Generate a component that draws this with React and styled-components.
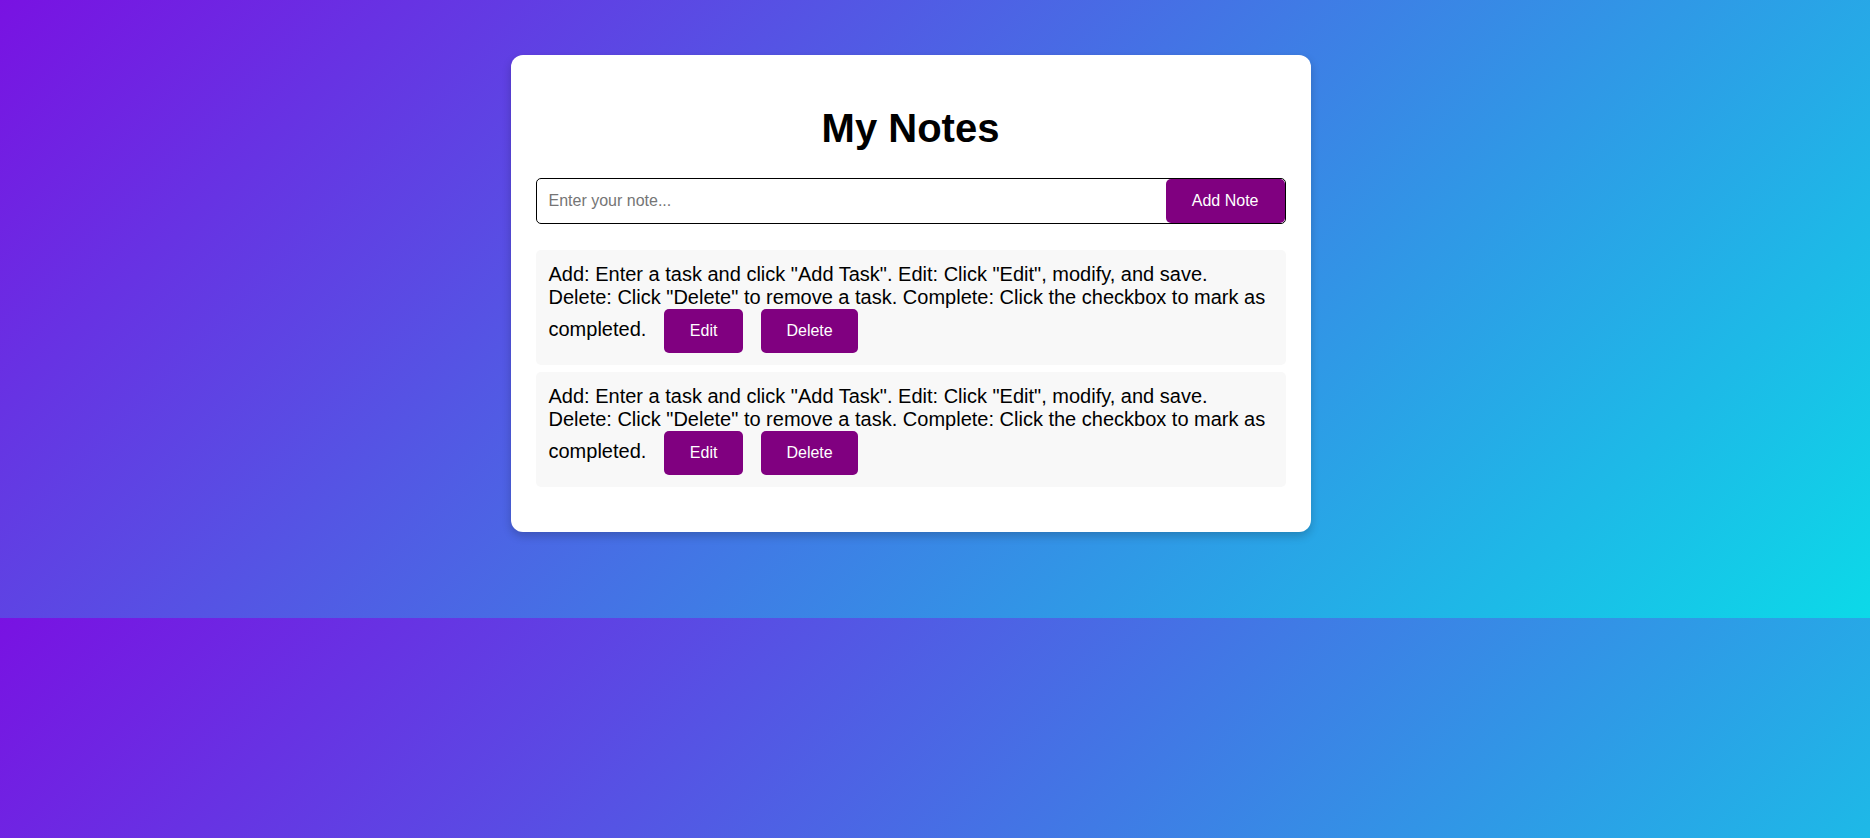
import React, { useState } from 'react';
import styled, { createGlobalStyle } from 'styled-components';

const GlobalStyle = createGlobalStyle`
  html, body {
    margin: 0;
  }
  body {
    background: linear-gradient(135deg, #7912e2, #0cd9e8);
    font-family: 'Liberation Sans', Arial, sans-serif;
  }
`;

const Page = styled.div`
  padding: 55px 49px 86px 0;
`;

const Card = styled.div`
  width: 800px;
  box-sizing: border-box;
  margin: 0 auto;
  padding: 25px;
  background: #fff;
  border-radius: 12px;
  box-shadow: 0 4px 10px rgba(0, 0, 0, 0.2);
`;

const Title = styled.h1`
  font-size: 40px;
  font-weight: bold;
  text-align: center;
  color: #000;
  margin: 26px 0 27px;
`;

const InputRow = styled.form`
  display: flex;
  height: 46px;
  box-sizing: border-box;
  border: 1px solid #000;
  border-radius: 5px;
  overflow: hidden;
`;

const NoteInput = styled.input`
  flex: 1;
  border: none;
  outline: none;
  background: transparent;
  padding: 0 12px;
  font-family: inherit;
  font-size: 16px;
  color: #000;

  &::placeholder {
    color: #757575;
  }
`;

const PurpleButton = styled.button`
  background: #800080;
  color: #fff;
  border: none;
  border-radius: 5px;
  font-family: inherit;
  font-size: 16px;
  cursor: pointer;
`;

const AddButton = styled(PurpleButton)`
  padding: 0 26px;
`;

const NoteList = styled.div`
  display: flex;
  flex-direction: column;
  gap: 7px;
  margin: 26px 0 20px;
`;

const NoteItem = styled.div`
  background: #f8f8f8;
  border-radius: 5px;
  padding: 13px 13px 12px;
  font-size: 20px;
  color: #000;
`;

const ActionButton = styled(PurpleButton)`
  margin-left: 18px;
  padding: 13px 25.5px;
`;

const NOTE_TEXT =
  'Add: Enter a task and click "Add Task". Edit: Click "Edit", modify, and save. Delete: Click "Delete" to remove a task. Complete: Click the checkbox to mark as completed.';

export default function App() {
  const [notes] = useState([NOTE_TEXT, NOTE_TEXT]);
  const [draft, setDraft] = useState('');

  return (
    <>
      <GlobalStyle />
      <Page>
        <Card>
          <Title>My Notes</Title>
          <InputRow onSubmit={e => e.preventDefault()}>
            <NoteInput
              placeholder="Enter your note..."
              value={draft}
              onChange={e => setDraft(e.target.value)}
            />
            <AddButton type="submit">Add Note</AddButton>
          </InputRow>
          <NoteList>
            {notes.map((note, i) => (
              <NoteItem key={i}>
                {note}
                <ActionButton>Edit</ActionButton>
                <ActionButton>Delete</ActionButton>
              </NoteItem>
            ))}
          </NoteList>
        </Card>
      </Page>
    </>
  );
}
